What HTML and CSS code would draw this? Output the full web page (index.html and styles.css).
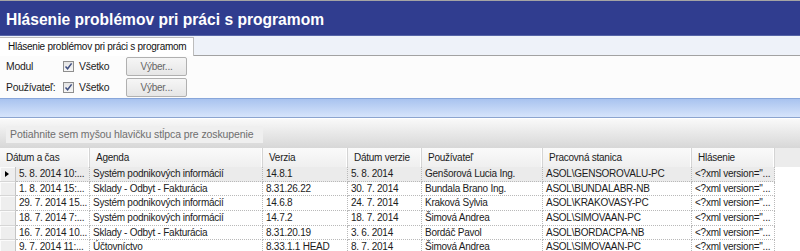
FILE: index.html
```html
<!DOCTYPE html>
<html lang="sk">
<head>
<meta charset="utf-8">
<title>Hlásenie problémov pri práci s programom</title>
<link rel="stylesheet" href="styles.css">
</head>
<body>
<div class="topline"></div>
<div class="titlebar"><span class="title">Hlásenie problémov pri práci s programom</span></div>
<div class="tabstrip"><div class="tab">Hlásenie problémov pri práci s programom</div></div>
<div class="filters">
  <div class="frow">
    <span class="flabel">Modul</span>
    <span class="chk"><svg width="9" height="9" viewBox="0 0 9 9"><path d="M1.5 4.5 L3.6 6.8 L7.6 1.4" fill="none" stroke="#3f4f80" stroke-width="1.5"/></svg></span>
    <span class="chklabel">Všetko</span>
    <span class="btn">Výber...</span>
  </div>
  <div class="frow">
    <span class="flabel">Používateľ:</span>
    <span class="chk"><svg width="9" height="9" viewBox="0 0 9 9"><path d="M1.5 4.5 L3.6 6.8 L7.6 1.4" fill="none" stroke="#3f4f80" stroke-width="1.5"/></svg></span>
    <span class="chklabel">Všetko</span>
    <span class="btn">Výber...</span>
  </div>
</div>
<div class="bluebar"></div>
<div class="grouppanel"><div class="groupbox">Potiahnite sem myšou hlavičku stĺpca pre zoskupenie</div></div>
<div class="grid">
  <div class="ghead">
    <div class="hc">Dátum a čas</div>
    <div class="hc">Agenda</div>
    <div class="hc">Verzia</div>
    <div class="hc">Dátum verzie</div>
    <div class="hc">Používateľ</div>
    <div class="hc">Pracovná stanica</div>
    <div class="hc">Hlásenie</div>
  </div>
  <div class="grow current">
    <div class="rh"><span class="arrow"></span></div>
    <div class="c">5. 8. 2014 10:...</div>
    <div class="c">Systém podnikových informácií</div>
    <div class="c">14.8.1</div>
    <div class="c">5. 8. 2014</div>
    <div class="c">Genšorová Lucia Ing.</div>
    <div class="c">ASOL\GENSOROVALU-PC</div>
    <div class="c">&lt;?xml version="...</div>
  </div>
  <div class="grow">
    <div class="rh"></div>
    <div class="c">1. 8. 2014 15:...</div>
    <div class="c">Sklady - Odbyt - Fakturácia</div>
    <div class="c">8.31.26.22</div>
    <div class="c">30. 7. 2014</div>
    <div class="c">Bundala Brano Ing.</div>
    <div class="c">ASOL\BUNDALABR-NB</div>
    <div class="c">&lt;?xml version="...</div>
  </div>
  <div class="grow">
    <div class="rh"></div>
    <div class="c">29. 7. 2014 15...</div>
    <div class="c">Systém podnikových informácií</div>
    <div class="c">14.6.8</div>
    <div class="c">24. 7. 2014</div>
    <div class="c">Kraková Sylvia</div>
    <div class="c">ASOL\KRAKOVASY-PC</div>
    <div class="c">&lt;?xml version="...</div>
  </div>
  <div class="grow">
    <div class="rh"></div>
    <div class="c">18. 7. 2014 7:...</div>
    <div class="c">Systém podnikových informácií</div>
    <div class="c">14.7.2</div>
    <div class="c">18. 7. 2014</div>
    <div class="c">Šimová Andrea</div>
    <div class="c">ASOL\SIMOVAAN-PC</div>
    <div class="c">&lt;?xml version="...</div>
  </div>
  <div class="grow">
    <div class="rh"></div>
    <div class="c">16. 7. 2014 10...</div>
    <div class="c">Sklady - Odbyt - Fakturácia</div>
    <div class="c">8.31.20.19</div>
    <div class="c">3. 6. 2014</div>
    <div class="c">Bordáč Pavol</div>
    <div class="c">ASOL\BORDACPA-NB</div>
    <div class="c">&lt;?xml version="...</div>
  </div>
  <div class="grow">
    <div class="rh"></div>
    <div class="c">9. 7. 2014 11:...</div>
    <div class="c">Účtovníctvo</div>
    <div class="c">8.33.1.1 HEAD</div>
    <div class="c">8. 7. 2014</div>
    <div class="c">Šimová Andrea</div>
    <div class="c">ASOL\SIMOVAAN-PC</div>
    <div class="c">&lt;?xml version="...</div>
  </div>
</div>
</body>
</html>
```
FILE: styles.css
```css
* { box-sizing: border-box; }
html, body { margin: 0; padding: 0; }
body {
  width: 800px;
  height: 251px;
  overflow: hidden;
  background: #ffffff;
  font-family: "Liberation Sans", Arial, sans-serif;
  font-size: 10px;
  letter-spacing: -0.25px;
  color: #1c1c1c;
}
.topline { height: 1px; background: #a4a4a4; }
.titlebar {
  height: 35px;
  background: #303d8f;
  border-bottom: 1px solid #5564a6;
  padding: 10px 0 0 6px;
}
.title {
  color: #ffffff;
  font-weight: bold;
  font-size: 15.6px;
  letter-spacing: 0;
  line-height: 18px;
  display: block;
}
.tabstrip {
  height: 20px;
  background: #eef2f9;
  border-bottom: 1px solid #a2a2a2;
  padding-top: 1px;
}
.tab {
  width: 194px;
  height: 20px;
  background: #ffffff;
  border: 1px solid #bcbcbc;
  border-bottom: none;
  border-left: none;
  padding: 3px 0 0 8px;
  line-height: 12px;
  color: #111;
}
.filters {
  height: 42px;
  background: #fcfcfc;
  padding-top: 1px;
  display: flex;
  flex-direction: column;
  gap: 2px;
}
.frow {
  height: 19px;
  display: flex;
  align-items: center;
}
.flabel { width: 63px; padding-left: 6px; font-size: 10.4px; }
.chk {
  width: 11px;
  height: 11px;
  border: 1px solid #8e8e8e;
  background: linear-gradient(#e4e4e4, #f6f6f6);
  display: flex;
  align-items: center;
  justify-content: center;
}
.chklabel { width: 52px; padding-left: 5px; font-size: 10.4px; }
.btn {
  width: 61px;
  height: 19px;
  border: 1px solid #b0b0b0;
  border-radius: 2px;
  background: linear-gradient(#f6f6f6, #e6e6e6);
  color: #666;
  display: flex;
  align-items: center;
  justify-content: center;
}
.bluebar {
  height: 20px;
  background: linear-gradient(#a9c3ef, #d6e4fb);
  border-top: 1px solid #88a6da;
  border-bottom: 1px solid #8ba4cf;
}
.grouppanel {
  height: 30px;
  border-top: 1px solid #ffffff;
  background: linear-gradient(#f9f9f9, #d7d7d7);
  padding: 7px 0 0 6px;
}
.groupbox {
  width: 257px;
  height: 17px;
  background: #efefef;
  color: #6e6e6e;
  padding: 3px 0 0 4px;
  line-height: 11px;
  font-size: 10.5px;
  letter-spacing: -0.1px;
  white-space: nowrap;
}
.grid { background: #ffffff; }
.ghead {
  display: grid;
  grid-template-columns: 90px 173px 85px 74px 121px 149px 83px 1fr;
  height: 19px;
  background: #ececec;
}
.hc {
  background: linear-gradient(#fafafa, #efefef);
  border-right: 1px solid #d4d4d4;
  box-shadow: inset -1px 0 0 #ffffff;
  padding: 4px 0 0 6px;
  line-height: 11px;
  white-space: nowrap;
  overflow: hidden;
}
.grow {
  display: grid;
  grid-template-columns: 16px 74px 173px 85px 74px 121px 149px 83px 1fr;
  height: 14.7px;
}
.c {
  border-right: 1px dotted #b9b9b9;
  border-bottom: 1px dotted #b9b9b9;
  padding-left: 3px;
  line-height: 14px;
  white-space: nowrap;
  overflow: hidden;
}
.current .c { background: #ebebeb; }
.rh {
  background: #eeeeee;
  border-right: 1px solid #c4c4c4;
  border-bottom: 1px solid #d6d6d6;
  box-shadow: inset 1px 1px 0 #fbfbfb;
  display: flex;
  align-items: center;
  padding-left: 5px;
}
.arrow {
  width: 0;
  height: 0;
  border-top: 3.5px solid transparent;
  border-bottom: 3.5px solid transparent;
  border-left: 4px solid #000;
}
```
